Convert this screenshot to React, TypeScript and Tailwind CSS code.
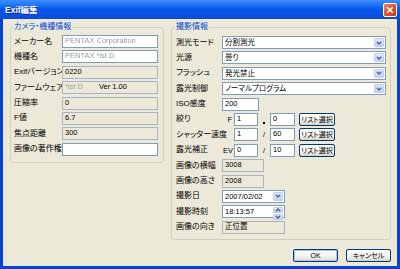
import React from "react";

const FONT = "font-['Liberation_Sans','Noto_Sans_CJK_JP',sans-serif] [font-feature-settings:'palt']";

function Field({
  w,
  white,
  children,
}: {
  w: string;
  white?: boolean;
  children?: React.ReactNode;
}) {
  return (
    <div
      className={`${w} h-[13px] shrink-0 border px-[2px] text-[7.5px] leading-[10px] flex items-start overflow-hidden whitespace-nowrap ${
        white ? "bg-white border-[#7F9DB9]" : "bg-[#ECE9D8] border-[#A7B4C2]"
      }`}
    >
      {children}
    </div>
  );
}

function Chevron({ up }: { up?: boolean }) {
  return (
    <svg width="6" height="4" viewBox="0 0 6 4">
      <path
        d={up ? "M0.8 3.2 L3 1 L5.2 3.2" : "M0.8 0.8 L3 3 L5.2 0.8"}
        fill="none"
        stroke="#4D6185"
        strokeWidth="1.3"
      />
    </svg>
  );
}

function Select({ w, value }: { w: string; value: string }) {
  return (
    <div className={`${w} h-[13px] shrink-0 border border-[#7F9DB9] bg-white flex items-stretch`}>
      <span className="flex-1 px-[2px] text-[7.5px] leading-[11px] whitespace-nowrap overflow-hidden">{value}</span>
      <span className="w-[10px] m-[1px] rounded-[1px] border border-[#BFD0F5] bg-gradient-to-b from-[#E0E9FD] to-[#BFD1FA] flex items-center justify-center">
        <Chevron />
      </span>
    </div>
  );
}

function Spin({ w, value }: { w: string; value: string }) {
  return (
    <div className={`${w} h-[13px] shrink-0 border border-[#7F9DB9] bg-white flex items-stretch`}>
      <span className="flex-1 px-[2px] text-[7.5px] leading-[11px] whitespace-nowrap">{value}</span>
      <span className="w-[10px] m-[1px] flex flex-col gap-[1px]">
        <span className="flex-1 rounded-[1px] border border-[#BFD0F5] bg-gradient-to-b from-[#E0E9FD] to-[#BFD1FA] flex items-center justify-center">
          <Chevron up />
        </span>
        <span className="flex-1 rounded-[1px] border border-[#BFD0F5] bg-gradient-to-b from-[#E0E9FD] to-[#BFD1FA] flex items-center justify-center">
          <Chevron />
        </span>
      </span>
    </div>
  );
}

function XpButton({ w, children, def }: { w: string; children: React.ReactNode; def?: boolean }) {
  return (
    <button
      className={`${w} h-[13px] shrink-0 rounded-[2px] border border-[#003C74] bg-gradient-to-b from-white via-[#F5F4EF] to-[#DCDAD1] text-[7px] leading-[11px] text-black flex items-center justify-center whitespace-nowrap ${
        def ? "shadow-[inset_0_0_0_1px_#A8C4F0]" : "shadow-[inset_0_-1px_0_#D6D0C5]"
      }`}
    >
      {children}
    </button>
  );
}

function Row({ label, lw, children }: { label: string; lw: string; children: React.ReactNode }) {
  return (
    <div className="flex items-center h-[13px]">
      <span className={`${lw} shrink-0 whitespace-nowrap text-[8px] leading-[10px]`}>{label}</span>
      {children}
    </div>
  );
}

function Blur({ children }: { children: React.ReactNode }) {
  return <span className="text-[#9A9A9A] blur-[0.5px]">{children}</span>;
}

export default function App() {
  return (
    <div className={`w-[400px] h-[269px] bg-[#0842D4] flex flex-col ${FONT} text-black`}>
      {/* title bar */}
      <div className="h-[19px] shrink-0 flex items-center bg-gradient-to-b from-[#3D8EFC] via-[#0657EC] to-[#0A4CD9] pl-[5px] pr-[3px]">
        <span className="flex-1 text-white font-bold text-[8.5px] leading-[10px] [text-shadow:1px_1px_0_#0A2A8A]">
          Exif編集
        </span>
        <span className="w-[14px] h-[14px] rounded-[2px] border border-white bg-gradient-to-br from-[#EB8A6C] via-[#DB5630] to-[#C0390F] flex items-center justify-center">
          <svg width="8" height="8" viewBox="0 0 8 8">
            <path d="M1.2 1.2 L6.8 6.8 M6.8 1.2 L1.2 6.8" stroke="white" strokeWidth="1.6" />
          </svg>
        </span>
      </div>

      {/* body */}
      <div className="flex-1 mx-[3px] mb-[3px] bg-[#ECE9D8] flex flex-col pt-[3px] pl-[7px] pr-[5px]">
        <div className="flex gap-[7px] items-start">
          <fieldset className="w-[154px] h-[141px] border border-[#D0D0BF] rounded-[3px] pl-[3px] pr-[5px] pt-[3px]">
            <legend className="text-[8px] leading-[10px] text-[#0046D5] px-[1px] -ml-[1px]">カメラ・機種情報</legend>
            <div className="flex flex-col gap-[2.4px]">
              <Row label="メーカー名" lw="w-[48px]">
                <Field w="w-[96px]" white>
                  <Blur>PENTAX Corporation</Blur>
                </Field>
              </Row>
              <Row label="機種名" lw="w-[48px]">
                <Field w="w-[96px]" white>
                  <Blur>PENTAX *ist D</Blur>
                </Field>
              </Row>
              <Row label="Exifバージョン" lw="w-[48px]">
                <Field w="w-[96px]">0220</Field>
              </Row>
              <Row label="ファームウェア" lw="w-[48px]">
                <Field w="w-[96px]">
                  <span className="w-[34px]">
                    <Blur>*ist D</Blur>
                  </span>
                  <span>Ver 1.00</span>
                </Field>
              </Row>
              <Row label="圧縮率" lw="w-[48px]">
                <Field w="w-[96px]">0</Field>
              </Row>
              <Row label="F値" lw="w-[48px]">
                <Field w="w-[96px]">6.7</Field>
              </Row>
              <Row label="焦点距離" lw="w-[48px]">
                <Field w="w-[96px]">300</Field>
              </Row>
              <Row label="画像の著作権" lw="w-[48px]">
                <Field w="w-[96px]" white />
              </Row>
            </div>
          </fieldset>

          <fieldset className="w-[220px] h-[218px] border border-[#D0D0BF] rounded-[3px] pl-[4px] pr-[4px] pt-[4px]">
            <legend className="text-[8px] leading-[10px] text-[#0046D5] px-[1px] -ml-[1px]">撮影情報</legend>
            <div className="flex flex-col gap-[2.4px]">
              <Row label="測光モード" lw="w-[46px]">
                <Select w="w-[164px]" value="分割測光" />
              </Row>
              <Row label="光源" lw="w-[46px]">
                <Select w="w-[164px]" value="曇り" />
              </Row>
              <Row label="フラッシュ" lw="w-[46px]">
                <Select w="w-[164px]" value="発光禁止" />
              </Row>
              <Row label="露光制御" lw="w-[46px]">
                <Select w="w-[164px]" value="ノーマルプログラム" />
              </Row>
              <Row label="ISO感度" lw="w-[46px]">
                <Field w="w-[37px]" white>200</Field>
              </Row>
              <Row label="絞り" lw="w-[46px]">
                <span className="w-[12px] shrink-0 text-right pr-[2px] text-[7.5px]">F</span>
                <Field w="w-[24px]" white>1</Field>
                <span className="w-[12px] h-[13px] shrink-0 flex items-end justify-center pb-[2px]">
                  <span className="w-[1.5px] h-[1.5px] bg-black" />
                </span>
                <Field w="w-[25px]" white>0</Field>
                <span className="w-[4px] shrink-0" />
                <XpButton w="w-[36px]">リスト選択</XpButton>
              </Row>
              <Row label="シャッター速度" lw="w-[46px]">
                <span className="w-[12px] shrink-0" />
                <Field w="w-[24px]" white>1</Field>
                <span className="w-[12px] shrink-0 text-center text-[7.5px]">/</span>
                <Field w="w-[25px]" white>60</Field>
                <span className="w-[4px] shrink-0" />
                <XpButton w="w-[36px]">リスト選択</XpButton>
              </Row>
              <Row label="露光補正" lw="w-[46px]">
                <span className="w-[12px] shrink-0 text-[7.5px] pl-[1px]">EV</span>
                <Field w="w-[24px]" white>0</Field>
                <span className="w-[12px] shrink-0 text-center text-[7.5px]">/</span>
                <Field w="w-[25px]" white>10</Field>
                <span className="w-[4px] shrink-0" />
                <XpButton w="w-[36px]">リスト選択</XpButton>
              </Row>
              <Row label="画像の横幅" lw="w-[46px]">
                <Field w="w-[42px]">3008</Field>
              </Row>
              <Row label="画像の高さ" lw="w-[46px]">
                <Field w="w-[42px]">2008</Field>
              </Row>
              <Row label="撮影日" lw="w-[46px]">
                <Select w="w-[63px]" value="2007/02/02" />
              </Row>
              <Row label="撮影時刻" lw="w-[46px]">
                <Spin w="w-[63px]" value="18:13:57" />
              </Row>
              <Row label="画像の向き" lw="w-[46px]">
                <Field w="w-[63px]">正位置</Field>
              </Row>
            </div>
          </fieldset>
        </div>

        <div className="mt-[9px] flex justify-end gap-[8px] pr-[1px]">
          <XpButton w="w-[45px]" def>
            OK
          </XpButton>
          <XpButton w="w-[45px]">キャンセル</XpButton>
        </div>
      </div>
    </div>
  );
}
